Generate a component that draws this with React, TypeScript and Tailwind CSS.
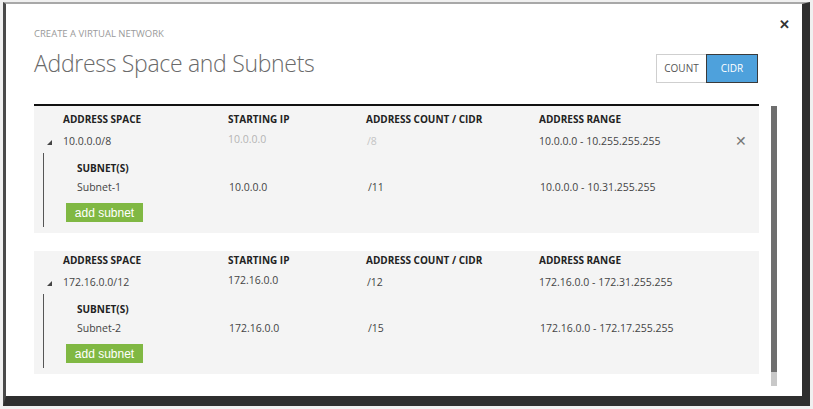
import {ReactNode} from "react";

interface Subnet {
    name: string;
    startIp: string;
    cidr: string;
    range: string;
}

interface AddressSpace {
    space: string;
    startIp: string;
    cidr: string;
    range: string;
    dim: boolean;
    removable: boolean;
    subnet: Subnet;
}

const spaces: AddressSpace[] = [
    {
        space: "10.0.0.0/8",
        startIp: "10.0.0.0",
        cidr: "/8",
        range: "10.0.0.0 - 10.255.255.255",
        dim: true,
        removable: true,
        subnet: {name: "Subnet-1", startIp: "10.0.0.0", cidr: "/11", range: "10.0.0.0 - 10.31.255.255"},
    },
    {
        space: "172.16.0.0/12",
        startIp: "172.16.0.0",
        cidr: "/12",
        range: "172.16.0.0 - 172.31.255.255",
        dim: false,
        removable: false,
        subnet: {name: "Subnet-2", startIp: "172.16.0.0", cidr: "/15", range: "172.16.0.0 - 172.17.255.255"},
    },
];

const Row = ({a, b, c, d, lead, tail, className}: {
    a: ReactNode; b?: ReactNode; c?: ReactNode; d?: ReactNode; lead?: ReactNode; tail?: ReactNode; className?: string
}) => (
    <div className={`flex items-center ${className ?? ""}`}>
        <div className="w-[29px] shrink-0 pl-[13px]">{lead}</div>
        <div className="w-[165px] shrink-0">{a}</div>
        <div className="w-[138px] shrink-0">{b}</div>
        <div className="w-[173px] shrink-0">{c}</div>
        <div className="w-[196px] shrink-0">{d}</div>
        <div className="w-[14px] shrink-0">{tail}</div>
    </div>
);

const SpaceBlock = ({item, first}: { item: AddressSpace; first: boolean }) => (
    <div className={`bg-[#f4f4f4] ${first ? "pt-[5px]" : "pt-[1px]"} pb-[6px]`}>
        <Row
            className="h-[16px] text-[10px] font-bold text-[#222]"
            a="ADDRESS SPACE" b="STARTING IP" c="ADDRESS COUNT / CIDR" d="ADDRESS RANGE"
        />
        <Row
            className="h-[20px] mt-[5px] text-[#444]"
            lead={
                <svg width="5" height="5" viewBox="0 0 5 5">
                    <polygon points="5,0 5,5 0,5" fill="#444"/>
                </svg>
            }
            a={item.space}
            b={<span className={item.dim ? "text-[#b4b4b4] relative top-[-2px]" : "relative top-[-2px]"}>{item.startIp}</span>}
            c={<span className={item.dim ? "text-[#c4c4c4] pl-px" : "pl-px"}>{item.cidr}</span>}
            d={item.range}
            tail={item.removable ? <span className="text-[#777] text-[14px] leading-none">✕</span> : null}
        />
        <div className="ml-[9px] border-l border-[#555] pt-[5px] pb-[5px] mt-[1px]">
            <div className="pl-[33px] h-[20px] flex items-center text-[10px] font-bold text-[#222]">SUBNET(S)</div>
            <div className="flex items-center h-[20px] text-[#444]">
                <div className="w-[185px] shrink-0 pl-[33px]">{item.subnet.name}</div>
                <div className="w-[138px] shrink-0">{item.subnet.startIp}</div>
                <div className="w-[173px] shrink-0 pl-px">{item.subnet.cidr}</div>
                <div>{item.subnet.range}</div>
            </div>
            <button
                className="ml-[22px] mt-[5px] h-[19px] w-[77px] bg-[#80b843] text-white text-[12px] font-['Liberation_Sans',sans-serif] leading-none">
                add subnet
            </button>
        </div>
    </div>
);

export default function App() {
    return (
        <div className="w-[813px] h-[409px] bg-[#f0f0f0] pl-[3px] pr-[3px] pb-[3px] pt-[2px] font-['Open_Sans',sans-serif]">
            <div className="w-full h-full border-l-[3px] border-l-[#4a4a4a] border-t-2 border-t-[#a8a8a8] border-r-[8px] border-r-[#2e2e2e] border-b-[10px] border-b-[#2e2e2e] bg-white flex flex-col">
                <div className="flex justify-end pr-[12px] pt-[14px] h-[22px]">
                    <span className="text-[#333] text-[13px] font-bold leading-none">✕</span>
                </div>
                <div className="pl-[28px] pr-[44px] flex items-start">
                    <div className="flex-1">
                        <div className="text-[9.5px] text-[#9a9a9a] mt-[2px] leading-[12px]">CREATE A VIRTUAL NETWORK</div>
                        <div className="text-[23px] font-light text-[#6a6a6a] leading-[30px] mt-[8px] tracking-[-0.3px]">Address Space and Subnets</div>
                    </div>
                    <div className="flex mt-[28px] text-[10px] h-[29px]">
                        <div className="w-[50px] border border-[#cfcfcf] border-r-0 flex items-center justify-center text-[#555]">COUNT</div>
                        <div className="w-[52px] border border-[#3a3a3a] bg-[#4ea1dc] flex items-center justify-center text-white">CIDR</div>
                    </div>
                </div>
                <div className="flex pl-[28px] mt-[21px] gap-[12px]">
                    <div className="w-[725px] text-[10.5px] border-t-2 border-[#111]">
                        <SpaceBlock item={spaces[0]} first={true}/>
                        <div className="h-[18px] bg-white"/>
                        <SpaceBlock item={spaces[1]} first={false}/>
                    </div>
                    <div className="w-[6px] mt-[2px] flex flex-col">
                        <div className="h-[266px] bg-[#6e6e6e]"/>
                        <div className="h-[14px] bg-[#c8c8c8]"/>
                    </div>
                </div>
            </div>
        </div>
    );
}
